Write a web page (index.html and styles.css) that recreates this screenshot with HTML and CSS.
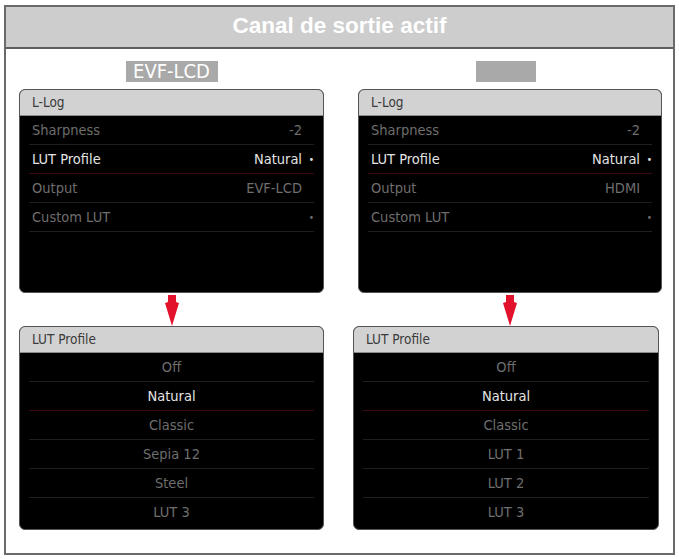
FILE: index.html
```html
<!DOCTYPE html>
<html>
<head>
<meta name="viewport" content="width=device-width, initial-scale=1">
<title>Canal de sortie actif</title>
<link rel="stylesheet" href="styles.css">
</head>
<body>

<div class="frame">
  <div class="title">Canal de sortie actif</div>

  <div class="columns">
    <!-- EVF / LCD output -->
    <div class="col">
      <div class="tag">EVF-LCD</div>
      <div class="panel">
        <div class="panel-head">L-Log</div>
        <div class="row"><span>Sharpness</span><span class="val">-2</span><span class="more"></span></div>
        <div class="row sel"><span>LUT Profile</span><span class="val">Natural</span><span class="more">&bull;</span></div>
        <div class="row"><span>Output</span><span class="val">EVF-LCD</span><span class="more"></span></div>
        <div class="row"><span>Custom LUT</span><span class="val"></span><span class="more">&bull;</span></div>
      </div>
      <div class="arrow">
        <svg width="16" height="31" viewBox="0 0 16 31"><polygon points="4,0 12,0 12,7 15,8 8,31 1,8 4,7" fill="#e3122c"/></svg>
      </div>
      <div class="panel">
        <div class="panel-head">LUT Profile</div>
        <div class="item">Off</div>
        <div class="item sel">Natural</div>
        <div class="item">Classic</div>
        <div class="item">Sepia 12</div>
        <div class="item">Steel</div>
        <div class="item last">LUT 3</div>
      </div>
    </div>

    <!-- HDMI output -->
    <div class="col">
      <div class="tag blank"></div>
      <div class="panel">
        <div class="panel-head">L-Log</div>
        <div class="row"><span>Sharpness</span><span class="val">-2</span><span class="more"></span></div>
        <div class="row sel"><span>LUT Profile</span><span class="val">Natural</span><span class="more">&bull;</span></div>
        <div class="row"><span>Output</span><span class="val">HDMI</span><span class="more"></span></div>
        <div class="row"><span>Custom LUT</span><span class="val"></span><span class="more">&bull;</span></div>
      </div>
      <div class="arrow">
        <svg width="16" height="31" viewBox="0 0 16 31"><polygon points="4,0 12,0 12,7 15,8 8,31 1,8 4,7" fill="#e3122c"/></svg>
      </div>
      <div class="panel shift">
        <div class="panel-head">LUT Profile</div>
        <div class="item">Off</div>
        <div class="item sel">Natural</div>
        <div class="item">Classic</div>
        <div class="item">LUT 1</div>
        <div class="item">LUT 2</div>
        <div class="item last">LUT 3</div>
      </div>
    </div>
  </div>
</div>

</body>
</html>
```

FILE: styles.css
```css
* {box-sizing: border-box}
body {
  margin: 0;
  background-color: #fff;
  font-family: "DejaVu Sans Condensed", "DejaVu Sans", sans-serif;
}
.frame {
  margin: 5px 0 0 4px;
  width: 671px;
  height: 550px;
  border: 2px solid #6a6a6a;
}
.title {
  height: 42px;
  background-color: #cdcdcd;
  border-bottom: 2px solid #5e5e5e;
  color: #fff;
  font-family: "Liberation Sans", Arial, sans-serif;
  font-weight: bold;
  font-size: 22.5px;
  display: flex;
  align-items: center;
  justify-content: center;
  padding-bottom: 2px;
}
.columns {
  display: grid;
  grid-template-columns: 305px 304px;
  column-gap: 34px;
  padding: 12px 11px 0 13px;
}
.col {
  display: flex;
  flex-direction: column;
  align-items: center;
}
.tag {
  width: 92px;
  height: 21px;
  margin-bottom: 7px;
  background-color: #a9a9a9;
  color: #fff;
  font-size: 20px;
  line-height: 21px;
  text-align: center;
}
.tag.blank {
  width: 60px;
  margin-left: -8px;
}
.panel {
  width: 100%;
  height: 204px;
  background-color: #000;
  border: 1px solid #555;
  border-radius: 6px;
  overflow: hidden;
}
.panel.shift {
  margin-left: -8px;
  width: 306px;
}
.panel-head {
  height: 26px;
  background-color: #d2d2d2;
  border-bottom: 1px solid #8a8a8a;
  color: #3a3a3a;
  font-size: 13.5px;
  line-height: 25px;
  padding-left: 12px;
}
.row {
  display: flex;
  align-items: center;
  height: 29px;
  margin: 0 9px;
  padding-left: 3px;
  border-bottom: 1px solid #1f1f1f;
  color: #6e6e6e;
  font-size: 14.5px;
}
.row .val {
  margin-left: auto;
}
.row .more {
  width: 12px;
  text-align: right;
  font-size: 10px;
}
.row.sel {
  color: #e4e4e4;
  border-bottom-color: #3c0b12;
}
.item {
  height: 29px;
  margin: 0 9px;
  border-bottom: 1px solid #1f1f1f;
  color: #6e6e6e;
  font-size: 14.5px;
  line-height: 28px;
  text-align: center;
}
.item.sel {
  color: #e4e4e4;
  border-bottom-color: #3c0b12;
}
.item.last {
  border-bottom: none;
}
.arrow {
  height: 33px;
  padding-top: 2px;
  display: flex;
  justify-content: center;
}
```
